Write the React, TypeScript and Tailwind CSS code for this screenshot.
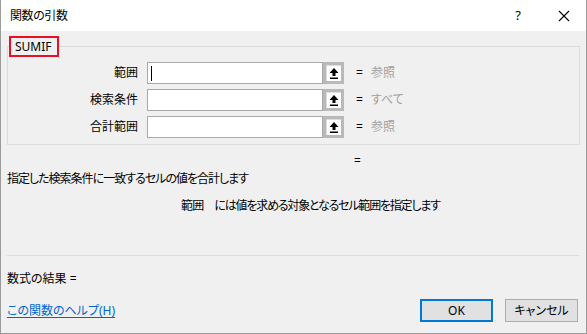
const FONT = "font-['Noto_Sans','Noto_Sans_CJK_JP',sans-serif] [font-feature-settings:'palt']";

const ARGS = [
  { label: "範囲", value: "参照", focus: true },
  { label: "検索条件", value: "すべて", focus: false },
  { label: "合計範囲", value: "参照", focus: false },
];

function RefButton() {
  return (
    <div className="flex h-[22px] w-[21px] items-center justify-center border-[3px] border-[#b9b9b9] bg-[#dcdcdc]">
      <div className="flex h-[15px] w-[14px] items-center justify-center bg-white">
        <svg width="10" height="11" viewBox="0 0 10 11">
          <path d="M5 0 L9.5 5 H6.5 V8 H3.5 V5 H0.5 Z" fill="#000" />
          <rect x="1" y="9.5" width="8" height="1.5" fill="#000" />
        </svg>
      </div>
    </div>
  );
}

function ArgRow({ label, value, focus }: { label: string; value: string; focus: boolean }) {
  return (
    <div className="flex h-[22px] items-center">
      <div className="w-[131px] pr-[1px] text-right text-[12px] text-black">{label}</div>
      <div className="ml-[8px] flex h-[22px] w-[176px] items-center border border-[#a9a9a9] bg-white">
        {focus && <div className="ml-[3px] h-[15px] w-[1px] bg-black" />}
      </div>
      <RefButton />
      <div className="ml-[12px] text-[12px] text-black">=</div>
      <div className="ml-[8px] text-[12px] text-[#a0a0a0]">{value}</div>
    </div>
  );
}

export default function App() {
  return (
    <div className={`flex h-[334px] w-[587px] flex-col border border-t-0 border-[#9a9a9a] bg-[#f0f0f0] text-[12px] leading-none text-black ${FONT}`}>
      {/* title bar */}
      <div className="flex h-[31px] shrink-0 items-center bg-white pl-[9px]">
        <span className="text-[12px] tracking-[-0.4px]">関数の引数</span>
        <div className="ml-auto flex items-center">
          <span className="mr-[37px] text-[13px]">?</span>
          <svg width="12" height="12" viewBox="0 0 12 12" className="mr-[16px]">
            <path d="M1 1 L11 11 M11 1 L1 11" stroke="#000" strokeWidth="1.1" />
          </svg>
        </div>
      </div>

      <div className="flex flex-1 flex-col px-[6px]">
        {/* group box */}
        <div className="relative mt-[15px] h-[99px] border border-[#dcdcdc] pt-[15px]">
          <div className="absolute left-[1px] top-[-11px] flex h-[21px] w-[50px] items-center border-2 border-[#e81123] bg-[#f0f0f0] pl-[4px] text-[12px]">
            SUMIF
          </div>
          <div className="flex flex-col gap-[5px]">
            {ARGS.map((a) => (
              <ArgRow key={a.label} {...a} />
            ))}
          </div>
        </div>

        <div className="mt-[10px] pl-[347px] text-[12px]">=</div>
        <div className="mt-[6px] tracking-[-1px]">指定した検索条件に一致するセルの値を合計します</div>
        <div className="mt-[15px] flex pl-[174px]">
          <span className="tracking-[-0.8px]">範囲</span>
          <span className="ml-[11px] tracking-[-1.2px]">には値を求める対象となるセル範囲を指定します</span>
        </div>

        <div className="mt-[43px] mr-[1px] h-[1px] bg-[#dcdcdc]" />
        <div className="mt-[17px]">数式の結果 =</div>

        <div className="mt-[14px] flex items-center">
          <a href="#" className="text-[#0066cc] underline underline-offset-2">
            この関数のヘルプ(H)
          </a>
          <div className="ml-auto flex gap-[12px] pr-[2px]">
            <button className="h-[23px] w-[73px] border-2 border-[#0078d7] bg-[#e1e1e1] text-[12px]">OK</button>
            <button className="h-[23px] w-[73px] border border-[#adadad] bg-[#e1e1e1] text-[12px]">キャンセル</button>
          </div>
        </div>
      </div>
    </div>
  );
}
